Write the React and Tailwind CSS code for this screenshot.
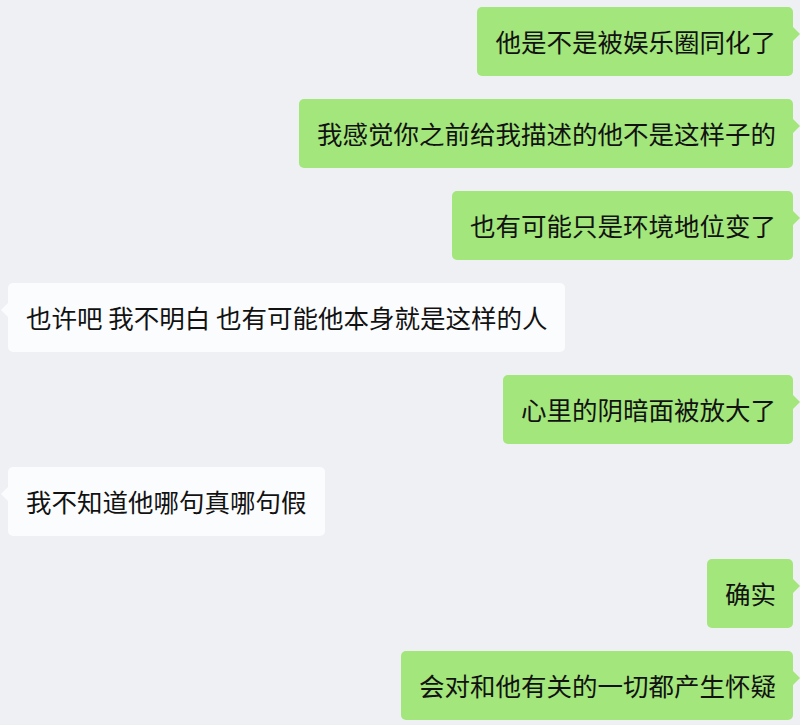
const messages = [
  { id: 1, mine: true, text: "他是不是被娱乐圈同化了" },
  { id: 2, mine: true, text: "我感觉你之前给我描述的他不是这样子的" },
  { id: 3, mine: true, text: "也有可能只是环境地位变了" },
  { id: 4, mine: false, text: "也许吧 我不明白 也有可能他本身就是这样的人" },
  { id: 5, mine: true, text: "心里的阴暗面被放大了" },
  { id: 6, mine: false, text: "我不知道他哪句真哪句假" },
  { id: 7, mine: true, text: "确实" },
  { id: 8, mine: true, text: "会对和他有关的一切都产生怀疑" },
];

function Bubble({ mine, text }) {
  return (
    <div className={mine ? "flex justify-end" : "flex justify-start"}>
      <div
        className={
          "relative h-[69px] flex items-center rounded-[5px] text-[25.5px] text-[#121212] whitespace-pre " +
          (mine ? "bg-[#a3e67b] pl-[18px] pr-[17px]" : "bg-[#fbfcfe] pl-[18px] pr-[18px]")
        }
      >
        {text}
        {/* 小三角尾巴 */}
        {mine ? (
          <span className="absolute top-[20px] -right-[7px] w-0 h-0 border-y-[7px] border-y-transparent border-l-[7px] border-l-[#a3e67b]" />
        ) : (
          <span className="absolute top-[20px] -left-[7px] w-0 h-0 border-y-[7px] border-y-transparent border-r-[7px] border-r-[#fbfcfe]" />
        )}
      </div>
    </div>
  );
}

export default function App() {
  return (
    <div
      className="w-[800px] h-[725px] overflow-hidden bg-[#eef0f3] flex flex-col gap-[23px] pt-[7px] pl-[8px] pr-[7px]"
      style={{ fontFamily: '"Noto Sans CJK SC", "Noto Sans", sans-serif' }}
    >
      {messages.map((m) => (
        <Bubble key={m.id} mine={m.mine} text={m.text} />
      ))}
    </div>
  );
}
